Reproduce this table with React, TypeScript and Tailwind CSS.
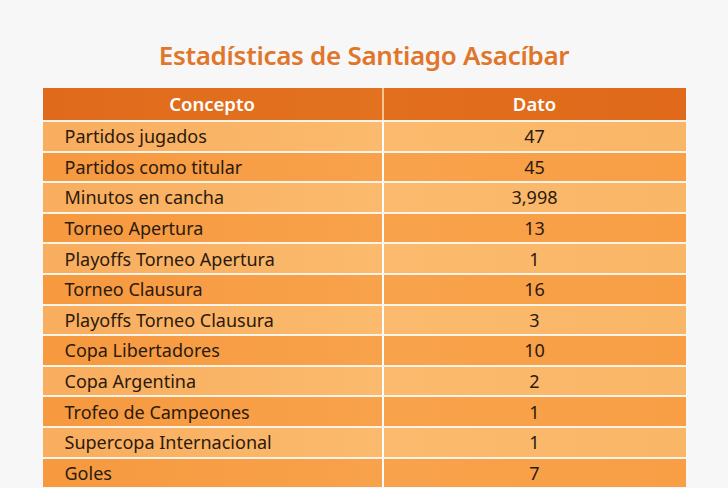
const rows: [string, string][] = [
  ["Partidos jugados", "47"],
  ["Partidos como titular", "45"],
  ["Minutos en cancha", "3,998"],
  ["Torneo Apertura", "13"],
  ["Playoffs Torneo Apertura", "1"],
  ["Torneo Clausura", "16"],
  ["Playoffs Torneo Clausura", "3"],
  ["Copa Libertadores", "10"],
  ["Copa Argentina", "2"],
  ["Trofeo de Campeones", "1"],
  ["Supercopa Internacional", "1"],
  ["Goles", "7"],
];

export default function App() {
  return (
    <div
      className="w-[728px] h-[488px] overflow-hidden bg-[#f7f7f7]"
      style={{ fontFamily: '"Noto Sans", "Open Sans", sans-serif' }}
    >
      <h1 className="pt-[37px] text-center text-[26px] leading-[36px] font-semibold tracking-[-0.3px] text-[#e0762a]">
        Estadísticas de Santiago Asacíbar
      </h1>
      <div className="mx-auto mt-[15px] w-[643px] flex flex-col gap-[2px] bg-[#fdf3e6]">
        <div className="flex h-[32px] gap-[2px] bg-[#f7c393]">
          <div className="w-[339px] flex items-center justify-center bg-gradient-to-r from-[#e06a1c] to-[#e2721f] text-white text-[18.5px] font-semibold">
            Concepto
          </div>
          <div className="flex-1 flex items-center justify-center bg-gradient-to-r from-[#e26f1d] to-[#e0691b] text-white text-[18.5px] font-semibold">
            Dato
          </div>
        </div>
        {rows.map(([label, value], i) => (
          <div key={label} className="flex h-[28.6px] gap-[2px] bg-white">
            <div
              className={
                i % 2 === 0
                  ? "w-[339px] flex items-center pl-[22px] pt-[1px] bg-gradient-to-r from-[#f9ad5e] to-[#fbba6d] text-[#2b1a0e] text-[18px]"
                  : "w-[339px] flex items-center pl-[22px] pt-[1px] bg-gradient-to-r from-[#f6993f] to-[#f8a24b] text-[#2b1a0e] text-[18px]"
              }
            >
              {label}
            </div>
            <div
              className={
                i % 2 === 0
                  ? "flex-1 flex items-center justify-center pt-[1px] bg-gradient-to-r from-[#fbba6d] to-[#fab667] text-[#2b1a0e] text-[18px]"
                  : "flex-1 flex items-center justify-center pt-[1px] bg-gradient-to-r from-[#f8a24b] to-[#f89f46] text-[#2b1a0e] text-[18px]"
              }
            >
              {value}
            </div>
          </div>
        ))}
      </div>
    </div>
  );
}
